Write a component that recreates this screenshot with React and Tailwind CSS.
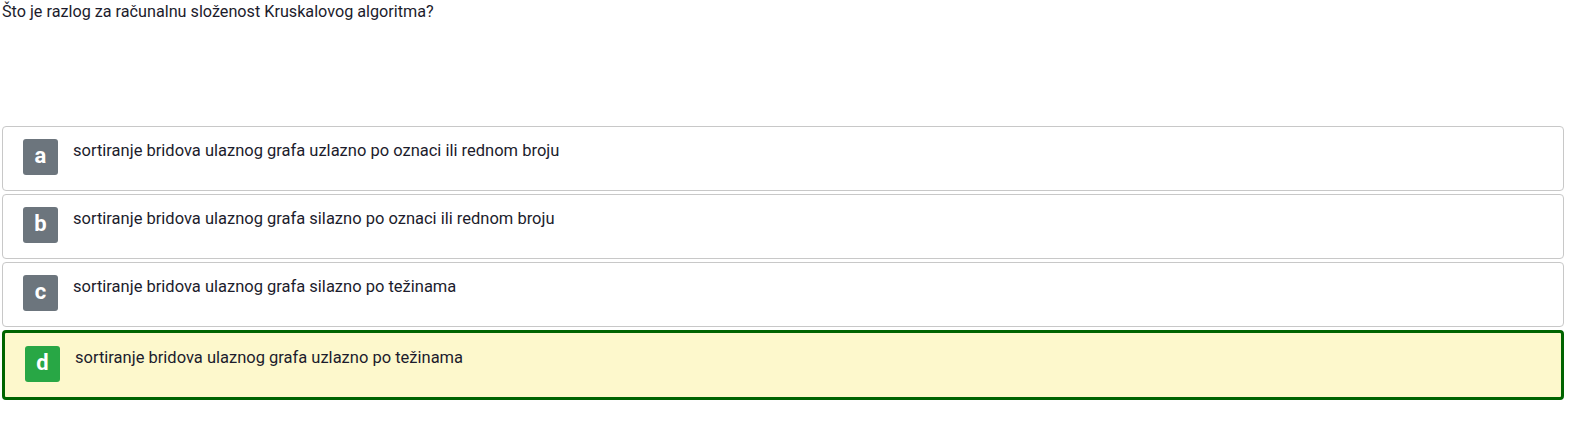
import React from "react";

const options = [
  { l: "a", t: "sortiranje bridova ulaznog grafa uzlazno po oznaci ili rednom broju" },
  { l: "b", t: "sortiranje bridova ulaznog grafa silazno po oznaci ili rednom broju" },
  { l: "c", t: "sortiranje bridova ulaznog grafa silazno po težinama" },
  { l: "d", t: "sortiranje bridova ulaznog grafa uzlazno po težinama", sel: true },
];

export default function App() {
  return (
    <div className="w-[1576px] h-[448px] bg-white text-[#1c1c2c]" style={{ fontFamily: "Roboto, 'Open Sans', sans-serif" }}>
      <div className="pl-[2px] pt-[2px] text-[16.2px] leading-[20px] h-[126px]">
        Što je razlog za računalnu složenost Kruskalovog algoritma?
      </div>
      <div className="flex flex-col gap-[3px] pl-[2px] w-[1564px]">
        {options.map((o) =>
          o.sel ? (
            <div key={o.l} className="h-[70px] rounded-[4px] border-[3px] border-[#006400] bg-[#fdf8cc] flex items-start pl-[20px] pt-[13px]">
              <div className="w-[35px] h-[36px] rounded-[3px] bg-[#28a745] text-white font-bold text-[22px] flex items-center justify-center leading-none pb-[2px]">
                {o.l}
              </div>
              <div className="ml-[15px] text-[16.5px] leading-[20px] mt-[2px]">{o.t}</div>
            </div>
          ) : (
            <div key={o.l} className="h-[65px] rounded-[4px] border border-[#c8c8c8] bg-white flex items-start pl-[20px] pt-[12px]">
              <div className="w-[35px] h-[36px] rounded-[3px] bg-[#6c757d] text-white font-bold text-[22px] flex items-center justify-center leading-none pb-[2px]">
                {o.l}
              </div>
              <div className="ml-[15px] text-[16.5px] leading-[20px] mt-[2px]">{o.t}</div>
            </div>
          )
        )}
      </div>
    </div>
  );
}
